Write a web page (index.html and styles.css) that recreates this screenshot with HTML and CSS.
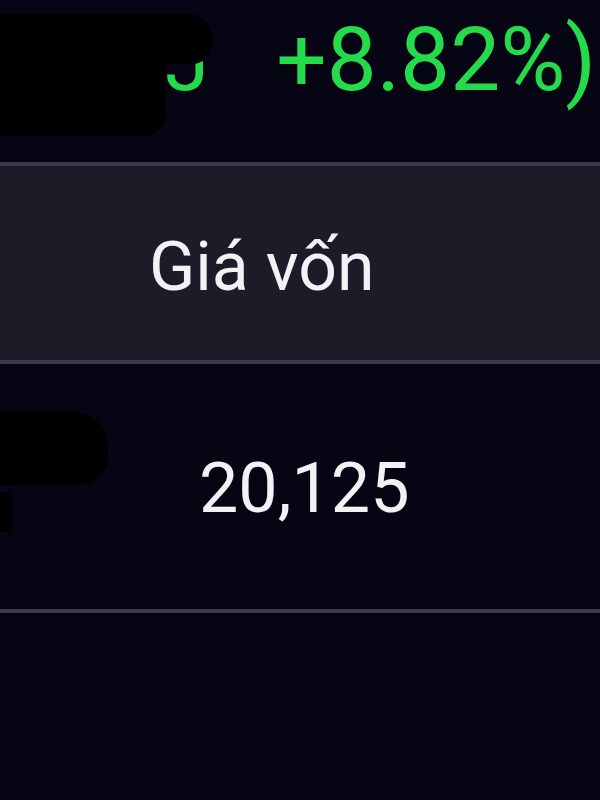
FILE: index.html
```html
<!DOCTYPE html>
<html lang="vi">
<head>
    <meta charset="UTF-8">
    <meta name="viewport" content="width=device-width, initial-scale=1.0">
    <title>Danh mục</title>
    <link rel="stylesheet" href="styles.css">
</head>
<body>
    <div class="summary">
        <span class="change-hidden">J</span>
        <span class="change">+8.82%)</span>
        <div class="mask mask-top"></div>
        <div class="mask mask-top-low"></div>
    </div>
    <div class="divider"></div>
    <div class="head">
        <span class="head-label">Giá vốn</span>
    </div>
    <div class="divider"></div>
    <div class="row">
        <span class="row-value">20,125</span>
        <div class="mask mask-row"></div>
        <div class="mask mask-row-small"></div>
    </div>
    <div class="divider"></div>
</body>
</html>
```

FILE: styles.css
```css
body {
    margin: 0;
    background-color: #050514;
    font-family: Roboto, "Noto Sans", sans-serif;
    color: #f2f2f4;
    width: 600px;
    height: 800px;
    overflow: hidden;
}
.summary {
    position: relative;
    height: 147px;
    padding-top: 15px;
    display: flex;
    align-items: baseline;
    color: #24db4c;
    line-height: 1;
}
.change-hidden {
    font-size: 80px;
    margin-left: 165px;
}
.change {
    font-size: 89px;
    margin-left: 67px;
}
.divider {
    height: 4px;
    background-color: #3a3a48;
}
.head {
    height: 194px;
    background-color: #1c1c28;
    display: flex;
    align-items: center;
    padding-left: 149px;
}
.head-label {
    font-size: 68px;
    line-height: 1;
    margin-top: 8px;
}
.row {
    position: relative;
    height: 245px;
    display: flex;
    align-items: center;
    padding-left: 199px;
}
.row-value {
    font-size: 70px;
    line-height: 1;
    margin-top: 2px;
}
.mask {
    position: absolute;
    background-color: #000;
}
.mask-top {
    left: 0;
    top: 14px;
    width: 212px;
    height: 50px;
    border-radius: 0 24px 20px 0;
}
.mask-top-low {
    left: 0;
    top: 50px;
    width: 166px;
    height: 86px;
    border-radius: 0 10px 22px 0;
}
.mask-row {
    left: 0;
    top: 47px;
    width: 108px;
    height: 74px;
    border-radius: 0 36px 30px 0;
}
.mask-row-small {
    left: 0;
    top: 128px;
    width: 13px;
    height: 40px;
    border-radius: 0 8px 8px 0;
}
```
